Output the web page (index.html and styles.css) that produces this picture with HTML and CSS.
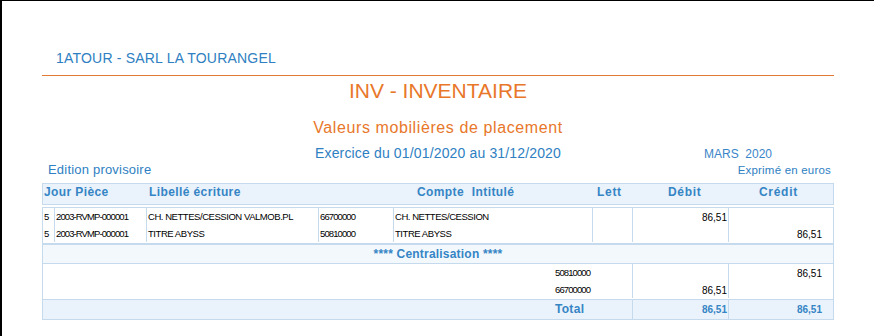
FILE: index.html
```html
<!DOCTYPE html>
<html lang="fr">
<head>
<meta charset="utf-8">
<title>INV - INVENTAIRE</title>
<link rel="stylesheet" href="styles.css">
</head>
<body>
<div class="page">
  <div class="report">
    <div class="company">1ATOUR - SARL LA TOURANGEL</div>
    <div class="rule"></div>
    <div class="title">INV - INVENTAIRE</div>
    <div class="subtitle">Valeurs mobilières de placement</div>
    <div class="period-row">
      <div></div>
      <div class="period">Exercice du 01/01/2020 au 31/12/2020</div>
      <div class="month">MARS&nbsp;&nbsp;2020</div>
    </div>
    <div class="meta-row">
      <div class="edition">Edition provisoire</div>
      <div class="currency">Exprimé en euros</div>
    </div>

    <div class="grid head">
      <div class="h-jour">Jour Pièce</div>
      <div class="h-lib">Libellé écriture</div>
      <div class="h-compte">Compte Intitulé</div>
      <div class="h-lett">Lett</div>
      <div class="h-debit">Débit</div>
      <div class="h-credit">Crédit</div>
    </div>

    <div class="grid lines">
      <div class="c">5</div><div class="c num">2003-RVMP-000001</div><div class="c">CH. NETTES/CESSION VALMOB.PL</div><div class="c num">66700000</div><div class="c">CH. NETTES/CESSION</div><div class="c"></div><div class="c amt">86,51</div><div class="c amt cr"></div>
      <div class="c">5</div><div class="c num">2003-RVMP-000001</div><div class="c">TITRE ABYSS</div><div class="c num">50810000</div><div class="c">TITRE ABYSS</div><div class="c"></div><div class="c amt"></div><div class="c amt cr">86,51</div>
    </div>

    <div class="central">**** Centralisation ****</div>

    <div class="grid3 recap">
      <div class="c acc num">50810000</div><div class="c amt"></div><div class="c amt cr">86,51</div>
      <div class="c acc num">66700000</div><div class="c amt">86,51</div><div class="c amt cr"></div>
    </div>

    <div class="grid3 total">
      <div class="c acc tot-label">Total</div><div class="c amt tot">86,51</div><div class="c amt cr tot">86,51</div>
    </div>
  </div>
</div>
</body>
</html>
```

FILE: styles.css
```css
html, body {
  margin: 0;
  padding: 0;
  background: #ffffff;
}

body {
  font-family: "Liberation Sans", Arial, sans-serif;
  color: #2e80c2;
}

.page {
  box-sizing: border-box;
  width: 874px;
  height: 336px;
  border-top: 1px solid #000000;
  border-left: 2px solid #000000;
  overflow: hidden;
}

.report {
  margin-left: 40px;
  width: 792px;
}

.company {
  margin-top: 49px;
  padding-left: 14px;
  height: 16px;
  line-height: 16px;
  font-size: 14px;
  letter-spacing: 0.2px;
  color: #2e80c2;
}

.rule {
  margin-top: 9px;
  border-top: 1px solid #e07a35;
}

.title {
  margin-top: 3px;
  height: 24px;
  line-height: 24px;
  font-size: 21px;
  text-align: center;
  color: #e8772a;
}

.subtitle {
  margin-top: 16px;
  height: 18px;
  line-height: 18px;
  font-size: 16px;
  letter-spacing: 0.6px;
  text-align: center;
  color: #e8772a;
}

.period-row {
  margin-top: 8px;
  display: grid;
  grid-template-columns: 1fr auto 1fr;
  align-items: baseline;
  height: 16px;
  line-height: 16px;
}

.period {
  font-size: 14px;
  letter-spacing: 0.15px;
  color: #2e80c2;
}

.month {
  padding-left: 143px;
  font-size: 12px;
  color: #3a86c8;
}

.meta-row {
  margin-top: 1px;
  display: flex;
  justify-content: space-between;
  align-items: baseline;
  height: 15px;
  line-height: 15px;
}

.edition {
  padding-left: 6px;
  font-size: 13px;
  letter-spacing: 0.2px;
  color: #2e80c2;
}

.currency {
  padding-right: 3px;
  font-size: 11.5px;
  letter-spacing: 0.2px;
  color: #2e80c2;
}

/* tables */
.grid {
  display: grid;
  grid-template-columns: 12px 92px 172px 75px 199px 40px 96px 104px;
  border: 1px solid #c6daee;
}

.head {
  margin-top: 6px;
  height: 22px;
  box-sizing: border-box;
  background: #eaf2fb;
  font-size: 12px;
  font-weight: bold;
  letter-spacing: 0.4px;
  line-height: 17px;
  color: #3585c5;
}

.h-jour { grid-column: 1 / 3; padding-left: 1px; }
.h-lib { grid-column: 3; padding-left: 2px; }
.h-compte { grid-column: 4 / 6; padding-left: 98px; word-spacing: 4px; }
.h-lett { grid-column: 6; padding-left: 4px; letter-spacing: 0.7px; }
.h-debit { grid-column: 7; padding-left: 35px; letter-spacing: 0.7px; }
.h-credit { grid-column: 8; padding-left: 30px; letter-spacing: 0.7px; }

.lines {
  margin-top: 2px;
  grid-auto-rows: 17px;
  padding-bottom: 1px;
}

.c {
  box-sizing: border-box;
  border-right: 1px solid #c6daee;
  padding-left: 1px;
  font-size: 9.5px;
  line-height: 17px;
  letter-spacing: -0.45px;
  color: #000000;
  white-space: nowrap;
  overflow: visible;
}

.c:nth-child(8n) { border-right: none; }

.num { letter-spacing: -0.9px; }

.amt {
  padding-left: 0;
  padding-right: 1px;
  padding-top: 1px;
  text-align: right;
  font-size: 10px;
  letter-spacing: 0;
}

.amt.cr {
  padding-right: 11px;
  border-right: none;
}

.central {
  border: 1px solid #c6daee;
  background: #f3f8fd;
  height: 20px;
  box-sizing: border-box;
  line-height: 18px;
  text-align: center;
  font-size: 12px;
  font-weight: bold;
  letter-spacing: 0.2px;
  color: #3585c5;
}

.grid3 {
  display: grid;
  grid-template-columns: 590px 96px 104px;
  border-left: 1px solid #c6daee;
  border-right: 1px solid #c6daee;
  border-bottom: 1px solid #c6daee;
}

.recap {
  grid-auto-rows: 17px;
  padding-bottom: 1px;
}

.acc {
  padding-left: 512px;
}

.total {
  background: #eaf2fb;
  grid-auto-rows: 19px;
}

.total .c {
  line-height: 19px;
  padding-top: 0;
}

.tot-label {
  font-size: 12px;
  font-weight: bold;
  letter-spacing: 0.3px;
  color: #3585c5;
}

.tot {
  font-weight: bold;
  color: #3585c5;
}
```
